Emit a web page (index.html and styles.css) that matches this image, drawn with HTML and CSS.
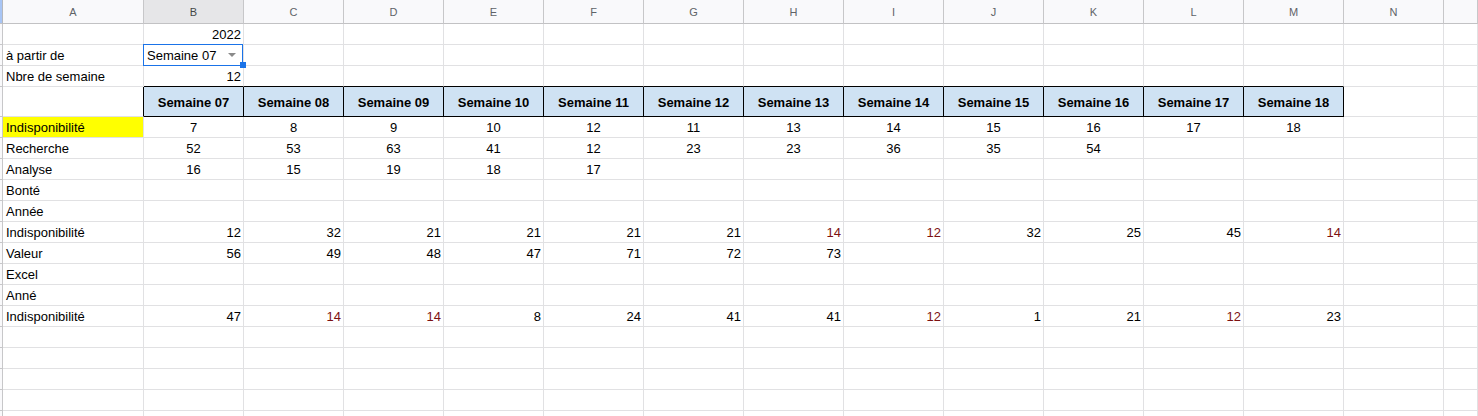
FILE: index.html
```html
<!DOCTYPE html>
<html lang="fr">
<head>
<meta charset="utf-8">
<title>Feuille</title>
<link rel="stylesheet" href="styles.css">
</head>
<body>
<div class="sheet">
  <!-- column headers -->
  <div class="h corner"></div><div class="h">A</div><div class="h sel">B</div><div class="h">C</div><div class="h">D</div><div class="h">E</div><div class="h">F</div><div class="h">G</div><div class="h">H</div><div class="h">I</div><div class="h">J</div><div class="h">K</div><div class="h">L</div><div class="h">M</div><div class="h">N</div><div class="h"></div>

  <!-- row 1 -->
  <div class="rh"></div><div class="c"></div><div class="c r">2022</div><div class="c"></div><div class="c"></div><div class="c"></div><div class="c"></div><div class="c"></div><div class="c"></div><div class="c"></div><div class="c"></div><div class="c"></div><div class="c"></div><div class="c"></div><div class="c"></div><div class="c"></div>

  <!-- row 2 -->
  <div class="rh"></div><div class="c">à partir de</div>
  <div class="c dd"><span>Semaine 07</span><svg class="arrow" width="8" height="4" viewBox="0 0 8 4"><path d="M0 0H8L4 4Z" fill="#8a8a8a"/></svg></div>
  <div class="c"></div><div class="c"></div><div class="c"></div><div class="c"></div><div class="c"></div><div class="c"></div><div class="c"></div><div class="c"></div><div class="c"></div><div class="c"></div><div class="c"></div><div class="c"></div><div class="c"></div>

  <!-- row 3 -->
  <div class="rh"></div><div class="c">Nbre de semaine</div><div class="c r tb">12</div><div class="c tb"></div><div class="c tb"></div><div class="c tb"></div><div class="c tb"></div><div class="c tb"></div><div class="c tb"></div><div class="c tb"></div><div class="c tb"></div><div class="c tb"></div><div class="c tb"></div><div class="c tb"></div><div class="c"></div><div class="c"></div>

  <!-- row 4 -->
  <div class="rh"></div><div class="c lb"></div><div class="c wk">Semaine 07</div><div class="c wk">Semaine 08</div><div class="c wk">Semaine 09</div><div class="c wk">Semaine 10</div><div class="c wk">Semaine 11</div><div class="c wk">Semaine 12</div><div class="c wk">Semaine 13</div><div class="c wk">Semaine 14</div><div class="c wk">Semaine 15</div><div class="c wk">Semaine 16</div><div class="c wk">Semaine 17</div><div class="c wk">Semaine 18</div><div class="c"></div><div class="c"></div>

  <!-- row 5 -->
  <div class="rh"></div><div class="c hl">Indisponibilité</div><div class="c m">7</div><div class="c m">8</div><div class="c m">9</div><div class="c m">10</div><div class="c m">12</div><div class="c m">11</div><div class="c m">13</div><div class="c m">14</div><div class="c m">15</div><div class="c m">16</div><div class="c m">17</div><div class="c m">18</div><div class="c"></div><div class="c"></div>

  <!-- row 6 -->
  <div class="rh"></div><div class="c">Recherche</div><div class="c m">52</div><div class="c m">53</div><div class="c m">63</div><div class="c m">41</div><div class="c m">12</div><div class="c m">23</div><div class="c m">23</div><div class="c m">36</div><div class="c m">35</div><div class="c m">54</div><div class="c"></div><div class="c"></div><div class="c"></div><div class="c"></div>

  <!-- row 7 -->
  <div class="rh"></div><div class="c">Analyse</div><div class="c m">16</div><div class="c m">15</div><div class="c m">19</div><div class="c m">18</div><div class="c m">17</div><div class="c"></div><div class="c"></div><div class="c"></div><div class="c"></div><div class="c"></div><div class="c"></div><div class="c"></div><div class="c"></div><div class="c"></div>

  <!-- row 8 -->
  <div class="rh"></div><div class="c">Bonté</div><div class="c"></div><div class="c"></div><div class="c"></div><div class="c"></div><div class="c"></div><div class="c"></div><div class="c"></div><div class="c"></div><div class="c"></div><div class="c"></div><div class="c"></div><div class="c"></div><div class="c"></div><div class="c"></div>

  <!-- row 9 -->
  <div class="rh"></div><div class="c">Année</div><div class="c"></div><div class="c"></div><div class="c"></div><div class="c"></div><div class="c"></div><div class="c"></div><div class="c"></div><div class="c"></div><div class="c"></div><div class="c"></div><div class="c"></div><div class="c"></div><div class="c"></div><div class="c"></div>

  <!-- row 10 -->
  <div class="rh"></div><div class="c">Indisponibilité</div><div class="c r">12</div><div class="c r">32</div><div class="c r">21</div><div class="c r">21</div><div class="c r">21</div><div class="c r">21</div><div class="c r red">14</div><div class="c r red">12</div><div class="c r">32</div><div class="c r">25</div><div class="c r">45</div><div class="c r red">14</div><div class="c"></div><div class="c"></div>

  <!-- row 11 -->
  <div class="rh"></div><div class="c">Valeur</div><div class="c r">56</div><div class="c r">49</div><div class="c r">48</div><div class="c r">47</div><div class="c r">71</div><div class="c r">72</div><div class="c r">73</div><div class="c"></div><div class="c"></div><div class="c"></div><div class="c"></div><div class="c"></div><div class="c"></div><div class="c"></div>

  <!-- row 12 -->
  <div class="rh"></div><div class="c">Excel</div><div class="c"></div><div class="c"></div><div class="c"></div><div class="c"></div><div class="c"></div><div class="c"></div><div class="c"></div><div class="c"></div><div class="c"></div><div class="c"></div><div class="c"></div><div class="c"></div><div class="c"></div><div class="c"></div>

  <!-- row 13 -->
  <div class="rh"></div><div class="c">Anné</div><div class="c"></div><div class="c"></div><div class="c"></div><div class="c"></div><div class="c"></div><div class="c"></div><div class="c"></div><div class="c"></div><div class="c"></div><div class="c"></div><div class="c"></div><div class="c"></div><div class="c"></div><div class="c"></div>

  <!-- row 14 -->
  <div class="rh"></div><div class="c">Indisponibilité</div><div class="c r">47</div><div class="c r red">14</div><div class="c r red">14</div><div class="c r">8</div><div class="c r">24</div><div class="c r">41</div><div class="c r">41</div><div class="c r red">12</div><div class="c r">1</div><div class="c r">21</div><div class="c r red">12</div><div class="c r">23</div><div class="c"></div><div class="c"></div>

  <!-- rows 15-19 -->
  <div class="rh"></div><div class="c"></div><div class="c"></div><div class="c"></div><div class="c"></div><div class="c"></div><div class="c"></div><div class="c"></div><div class="c"></div><div class="c"></div><div class="c"></div><div class="c"></div><div class="c"></div><div class="c"></div><div class="c"></div><div class="c"></div>
  <div class="rh"></div><div class="c"></div><div class="c"></div><div class="c"></div><div class="c"></div><div class="c"></div><div class="c"></div><div class="c"></div><div class="c"></div><div class="c"></div><div class="c"></div><div class="c"></div><div class="c"></div><div class="c"></div><div class="c"></div><div class="c"></div>
  <div class="rh"></div><div class="c"></div><div class="c"></div><div class="c"></div><div class="c"></div><div class="c"></div><div class="c"></div><div class="c"></div><div class="c"></div><div class="c"></div><div class="c"></div><div class="c"></div><div class="c"></div><div class="c"></div><div class="c"></div><div class="c"></div>
  <div class="rh"></div><div class="c"></div><div class="c"></div><div class="c"></div><div class="c"></div><div class="c"></div><div class="c"></div><div class="c"></div><div class="c"></div><div class="c"></div><div class="c"></div><div class="c"></div><div class="c"></div><div class="c"></div><div class="c"></div><div class="c"></div>
  <div class="rh"></div><div class="c"></div><div class="c"></div><div class="c"></div><div class="c"></div><div class="c"></div><div class="c"></div><div class="c"></div><div class="c"></div><div class="c"></div><div class="c"></div><div class="c"></div><div class="c"></div><div class="c"></div><div class="c"></div><div class="c"></div>
</div>
</body>
</html>
```

FILE: styles.css
```css
* { box-sizing: border-box; }

html, body {
  margin: 0;
  padding: 0;
  background: #ffffff;
  overflow: hidden;
}

.sheet {
  display: grid;
  grid-template-columns: 3px 141px repeat(13, 100px) 1fr;
  grid-template-rows: 24px 21px 21px 21px 30px repeat(15, 21px);
  width: 1478px;
  height: 416px;
  font-family: "Liberation Sans", Arial, sans-serif;
  font-size: 13px;
  color: #000000;
}

.h {
  background: #f9f9fb;
  border-right: 1px solid #c7c7c9;
  border-bottom: 1px solid #c2c2c4;
  color: #5f6368;
  font-size: 11px;
  line-height: 23px;
  padding-top: 1px;
  text-align: center;
  overflow: hidden;
}

.h.sel {
  background: #e6e6e8;
  color: #444746;
}

.h.corner {
  background: #a8c5f5;
  border-right: 1px solid #b5b8bd;
}

.rh {
  background: #f9f9fb;
  border-right: 1px solid #c7c7c9;
  border-bottom: 1px solid #c7c7c9;
}

.c {
  border-right: 1px solid #e1e1e3;
  border-bottom: 1px solid #e1e1e3;
  padding: 1px 3px 0 3px;
  line-height: 20px;
  white-space: nowrap;
  overflow: hidden;
}

.c.r { text-align: right; padding-right: 2px; }
.c.m { text-align: center; }
.c.red { color: #7d1212; }

.c.hl { background: #ffff00; }

.c.tb { border-bottom-color: #000000; }
.c.lb { border-right-color: #000000; }

.c.wk {
  background: #cfe2f3;
  border-right-color: #000000;
  border-bottom-color: #000000;
  font-weight: bold;
  text-align: center;
  line-height: 29px;
}

.c.dd {
  position: relative;
  overflow: visible;
  display: flex;
  align-items: center;
  justify-content: space-between;
  padding: 2px 7px 0 3px;
  z-index: 2;
}

.c.dd span { line-height: 18px; }

.c.dd .arrow { display: block; margin-top: -2px; }

.c.dd::before {
  content: "";
  position: absolute;
  left: -1px;
  top: -1px;
  right: 0;
  bottom: -1px;
  border: 1px solid #1a73e8;
  pointer-events: none;
}

.c.dd::after {
  content: "";
  position: absolute;
  right: -3px;
  bottom: -3px;
  width: 6px;
  height: 6px;
  background: #1a73e8;
}
```
